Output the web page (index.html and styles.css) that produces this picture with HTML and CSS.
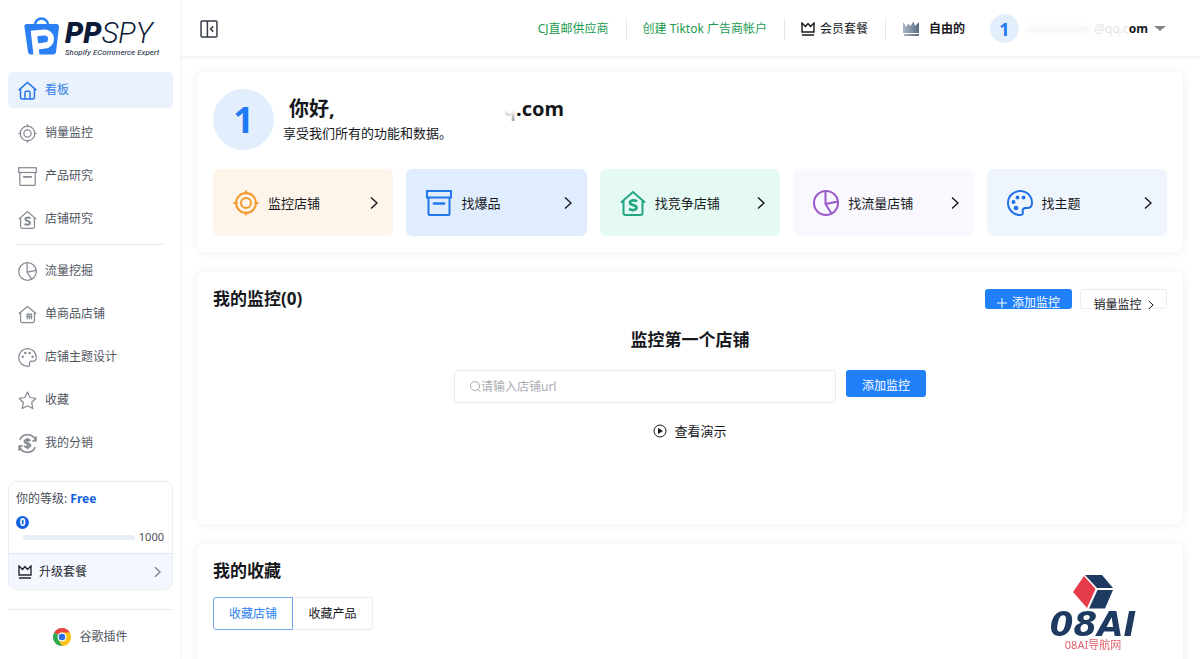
FILE: index.html
```html
<!DOCTYPE html>
<html lang="zh-CN">
<head>
<meta charset="utf-8">
<meta name="viewport" content="width=device-width, initial-scale=1">
<title>PPSPY</title>
<link rel="stylesheet" href="styles.css">
</head>
<body>
<svg class="sprite" aria-hidden="true">
  <symbol id="target" viewBox="0 0 26 26"><circle cx="13" cy="13" r="10"/><circle cx="13" cy="13" r="5"/><path d="M13 0.5v4M13 21.500v4M0.500 13h4M21.500 13h4"/></symbol>
  <symbol id="archive" viewBox="0 0 26 26"><rect x="1" y="1" width="24" height="6.500"/><path d="M2.500 7.500V24a1 1 0 0 0 1 1h19a1 1 0 0 0 1-1V7.500"/><path d="M8 13.500h10" stroke-width="2.700" stroke-linecap="round"/></symbol>
  <symbol id="shop" viewBox="0 0 26 26"><path d="M1 12.500L13 2l12 10.500M3.500 10.500V23a2 2 0 0 0 2 2h15a2 2 0 0 0 2-2V10.500"/><path stroke-width="2.700" d="M17 11.500c-2-1.700-7-1.500-7 1.300 0 3 6.500 1.700 6.500 4.800 0 3-5 3-7.500 1.300"/></symbol>
  <symbol id="pie" viewBox="0 0 26 26"><circle cx="13" cy="13" r="12"/><path d="M12.500 1v13L18.500 23.500M12.500 14L25 11.500"/></symbol>
  <symbol id="palette" viewBox="0 0 26 26"><path d="M13 1a12 12 0 1 0 0 24c3.500 0 3-2 2.700-3.700-.3-2 1.300-3.600 3.300-3.300 4 .6 6-1.500 6-5C25 6 20 1 13 1z"/><g fill="currentColor" stroke="none"><circle cx="6.500" cy="12" r="2"/><circle cx="10.500" cy="7.500" r="1.900"/><circle cx="16.500" cy="7.500" r="1.900"/><circle cx="9" cy="18" r="2.300"/></g></symbol>
  <symbol id="palette-sm" viewBox="0 0 26 26"><path d="M13 1a12 12 0 1 0 0 24c3.500 0 3-2 2.700-3.700-.3-2 1.300-3.600 3.300-3.300 4 .6 6-1.500 6-5C25 6 20 1 13 1z"/><g fill="currentColor" stroke="none"><circle cx="6.500" cy="12" r="1.700"/><circle cx="10" cy="7" r="1.700"/><circle cx="16" cy="7" r="1.700"/><circle cx="20" cy="12" r="1.700"/></g></symbol>
  <symbol id="home" viewBox="0 0 26 26"><path d="M1 12.500L13 2l12 10.500M3.500 10.500V22a2.500 2.500 0 0 0 2.500 2.500h14a2.500 2.500 0 0 0 2.500-2.500V10.500M9.500 24.500V16a2 2 0 0 1 2-2h3a2 2 0 0 1 2 2v8.500"/></symbol>
  <symbol id="single" viewBox="0 0 26 26"><path d="M1 12L13 2l12 10M3.500 10.500V22a2 2 0 0 0 2 2h15a2 2 0 0 0 2-2V10.500"/><path d="M12.500 19.500v-7h6v7M15.500 12.500v7M12.500 16h6"/></symbol>
  <symbol id="star" viewBox="0 0 26 26"><path stroke-linejoin="round" d="M13 1.500l3.500 7.400 8 1.100-5.800 5.700 1.500 8.300L13 20.200 5.800 24l1.500-8.300L1.500 10l8-1.100z"/></symbol>
  <symbol id="coin" viewBox="0 0 26 26"><path stroke-width="2.200" d="M2 17A11.500 11.500 0 0 0 23.500 18M24 9A11.500 11.500 0 0 0 2.500 8M24.500 3v6.500h-5M1.500 23v-6.500h5"/><path stroke-width="2.700" d="M17 9.500c-2-2.300-8-2-8 1s8 2 8 5-6 3.300-8.500.8M13 5v16"/></symbol>
  <symbol id="crown" viewBox="0 0 14 14"><path d="M1 1v9h12V1L9.500 4.500 7 1.500 4.500 4.500zM1 13h12"/></symbol>
  <symbol id="chevron" viewBox="0 0 8 14"><path d="M1 1.500L7 7l-6 5.500"/></symbol>
</svg>
<div class="app">
  <aside class="sidebar">
    <a class="brand" href="#" aria-label="PPSPY">
      <svg class="brand-bag" viewBox="0 0 36 40" aria-hidden="true"><path d="M11 9a6.500 6.500 0 0 1 13 0" fill="none" stroke="#2c83f6" stroke-width="2.500"/><path d="M2.500 8h30A2.500 2.500 0 0 1 35 11l-3 25a3 3 0 0 1-3 2.500H7A3 3 0 0 1 4 36L.5 11a2.500 2.500 0 0 1 2-3z" fill="#2c7ff2"/><path d="M12.500 39L10 17.500l10-1a6 6 0 0 1 1 13l-7 1" fill="none" stroke="#fff" stroke-width="6"/></svg>
      <span class="brand-text"><span class="brand-name"><b>PP</b>SPY</span><span class="brand-sub">Shopify ECommerce Expert</span></span>
    </a>
    <nav class="nav">
      <a class="nav-item active" href="#"><svg class="icon"><use href="#home"/></svg>看板</a>
      <a class="nav-item" href="#"><svg class="icon"><use href="#target"/></svg>销量监控</a>
      <a class="nav-item" href="#"><svg class="icon"><use href="#archive"/></svg>产品研究</a>
      <a class="nav-item" href="#"><svg class="icon"><use href="#shop"/></svg>店铺研究</a>
      <hr class="nav-line">
      <a class="nav-item" href="#"><svg class="icon"><use href="#pie"/></svg>流量挖掘</a>
      <a class="nav-item" href="#"><svg class="icon"><use href="#single"/></svg>单商品店铺</a>
      <a class="nav-item" href="#"><svg class="icon"><use href="#palette-sm"/></svg>店铺主题设计</a>
      <a class="nav-item" href="#"><svg class="icon"><use href="#star"/></svg>收藏</a>
      <a class="nav-item" href="#"><svg class="icon"><use href="#coin"/></svg>我的分销</a>
    </nav>
    <section class="level">
      <div class="level-body">
        <div>你的等级: <b class="level-name">Free</b></div>
        <span class="level-count">0</span>
        <div class="level-row"><span class="level-track"></span><span>1000</span></div>
      </div>
      <a class="level-link" href="#"><svg class="crown"><use href="#crown"/></svg>升级套餐<svg class="chevron small"><use href="#chevron"/></svg></a>
    </section>
    <a class="plugin" href="#">
      <svg class="chrome" viewBox="0 0 18 18" aria-hidden="true"><path d="M9 9L1.200 4.500a9 9 0 0 1 15.600 0z" fill="#e8453c"/><path d="M9 9l7.800-4.500A9 9 0 0 1 9 18z" fill="#fbc116"/><path d="M9 9v9A9 9 0 0 1 1.200 4.500z" fill="#2da94f"/><path d="M9 4.500h7.800l-4 6.700zM5 11.200l4 2 3.900-2L9 18z" fill="#fbc116"/><circle cx="9" cy="9" r="4.500" fill="#fff"/><circle cx="9" cy="9" r="3.300" fill="#2d6fe0"/></svg>
      谷歌插件
    </a>
  </aside>
  <div class="page">
    <header class="topbar">
      <button class="collapse" type="button" aria-label="收起"><svg viewBox="0 0 17 17"><rect x="1" y="1" width="15" height="15" rx="1"/><path d="M7 1v15M12.500 6L10 8.500l2.500 2.500"/></svg></button>
      <div class="top-items">
        <a class="green" href="#">CJ直邮供应商</a>
        <span class="sep"></span>
        <a class="green" href="#">创建 Tiktok 广告商帐户</a>
        <span class="sep"></span>
        <a class="plan" href="#"><svg class="crown"><use href="#crown"/></svg>会员套餐</a>
        <span class="sep"></span>
        <span class="tier"><svg class="tier-crown" viewBox="0 0 18 15" aria-hidden="true"><defs><linearGradient id="steel"><stop offset="0" stop-color="#a9b7c9"/><stop offset="1" stop-color="#596b80"/></linearGradient></defs><path d="M1 1l3.500 5L6 2.500 8.500 5l3-4.500L13 5l4-4v11H1zM2 13h15v2H2z" fill="url(#steel)"/></svg>自由的</span>
        <button class="account" type="button"><span class="avatar">1</span><span class="mail"><span class="smudge"></span><span class="mail-faint">@qq.c</span><b>om</b></span><span class="caret"></span></button>
      </div>
    </header>
    <main class="main">
      <section class="card">
        <div class="hello">
          <span class="avatar large">1</span>
          <div>
            <h1 class="greeting"><span>你好,</span><span class="greeting-mail"><i class="faded">q</i>.com</span></h1>
            <p class="tagline">享受我们所有的功能和数据。</p>
          </div>
        </div>
        <div class="features">
          <a class="feature orange" href="#"><svg class="icon"><use href="#target"/></svg>监控店铺<svg class="chevron"><use href="#chevron"/></svg></a>
          <a class="feature blue" href="#"><svg class="icon"><use href="#archive"/></svg>找爆品<svg class="chevron"><use href="#chevron"/></svg></a>
          <a class="feature mint" href="#"><svg class="icon"><use href="#shop"/></svg>找竞争店铺<svg class="chevron"><use href="#chevron"/></svg></a>
          <a class="feature purple" href="#"><svg class="icon"><use href="#pie"/></svg>找流量店铺<svg class="chevron"><use href="#chevron"/></svg></a>
          <a class="feature sky" href="#"><svg class="icon"><use href="#palette"/></svg>找主题<svg class="chevron"><use href="#chevron"/></svg></a>
        </div>
      </section>
      <section class="card monitor">
        <div class="card-head">
          <h2 class="title">我的监控(0)</h2>
          <div class="actions">
            <button class="btn primary short" type="button"><svg class="plus" viewBox="0 0 10 10"><path d="M5 0v10M0 5h10"/></svg>添加监控</button>
            <button class="btn plain short" type="button">销量监控<svg class="chevron tiny"><use href="#chevron"/></svg></button>
          </div>
        </div>
        <h3 class="title first">监控第一个店铺</h3>
        <form class="search">
          <label class="field"><svg class="lens" viewBox="0 0 11 12" aria-hidden="true"><circle cx="5" cy="5" r="4.500"/><path d="M8 8.500l2.500 2.500"/></svg><input type="text" placeholder="请输入店铺url" aria-label="店铺url"></label>
          <button class="btn primary add" type="button">添加监控</button>
        </form>
        <a class="demo" href="#"><svg viewBox="0 0 14 14" aria-hidden="true"><circle cx="7" cy="7" r="6" fill="none" stroke="currentColor"/><path d="M5 4l5 3-5 3z" fill="currentColor"/></svg>查看演示</a>
      </section>
      <section class="card saved">
        <h2 class="title">我的收藏</h2>
        <div class="tabs">
          <button class="tab on" type="button">收藏店铺</button><button class="tab" type="button">收藏产品</button>
        </div>
      </section>
    </main>
  </div>
</div>
<div class="mark">
  <svg viewBox="0 0 40 34" aria-hidden="true"><path d="M12 0h17l11 13H24z" fill="#1f3a61"/><path d="M24.500 15H40l-8 18.500H16z" fill="#1f3a61"/><path d="M11 1l11.500 13L14 33 0 17z" fill="#e63b48"/></svg>
  <span class="mark-name">08AI</span>
  <span class="mark-sub">08AI导航网</span>
</div>
</body>
</html>
```

FILE: styles.css
```css
* { box-sizing: border-box; }
body {
  margin: 0;
  font: 12px/18px "Noto Sans", "Noto Sans CJK SC", sans-serif;
  color: #16181c;
  background: #fff;
}
a { color: inherit; text-decoration: none; }
button { font: inherit; color: inherit; background: none; border: 0; padding: 0; cursor: pointer; }
h1, h2, h3, p { margin: 0; }
svg { flex: none; fill: none; stroke: currentColor; }
.sprite { display: none; }
.app { display: flex; height: 100vh; overflow: hidden; }

.sidebar {
  width: 180px;
  flex: none;
  padding: 0 7px 0 8px;
  box-shadow: 0 0 3px #e4e4e6;
}
.brand { display: flex; gap: 5px; height: 72px; padding: 16px 0 0 16px; color: #0d1b3a; }
.brand svg { stroke: none; }
.brand-bag { width: 36px; height: 40px; }
.brand-text { display: flex; flex-direction: column; padding-top: 1px; font-family: Roboto, sans-serif; font-style: italic; white-space: nowrap; }
.brand-name { font-size: 29px; line-height: 32px; font-weight: 300; }
.brand-name b { font-weight: 900; }
.brand-sub { font-size: 8px; line-height: 8px; font-weight: 400; }
.nav { display: flex; flex-direction: column; gap: 7px; }
.nav-item {
  display: flex;
  align-items: center;
  gap: 8px;
  height: 36px;
  padding-left: 10px;
  border-radius: 5px;
  color: #50555f;
}
.nav-item .icon { width: 19px; height: 19px; stroke-width: 1.7; color: #858a93; }
.nav-item.active { background: #eaf2fd; color: #3480e8; }
.nav-item.active .icon { color: #2274e6; stroke-width: 2; }
.nav-line { width: 148px; height: 1px; margin: 0 0 1px 8px; border: 0; background: #eaebee; }

.level { margin-top: 20px; border: 1px solid #e9ecf3; border-radius: 8px; overflow: hidden; color: #4a4e57; }
.level-body { height: 71px; padding: 8px 8px 0 7px; }
.level-name { color: #1260e0; }
.level-count {
  display: block;
  width: 13px;
  height: 13px;
  margin-top: 8px;
  border-radius: 50%;
  background: #1260e0;
  color: #fff;
  font-size: 10px;
  line-height: 13px;
  font-weight: 700;
  text-align: center;
}
.level-row { display: flex; align-items: center; gap: 4px; padding-left: 7px; font-size: 11px; line-height: 16px; }
.level-track { flex: 1; height: 5px; border-radius: 3px; background: #e9edf6; }
.level-link { display: flex; align-items: center; gap: 7px; height: 36px; padding: 0 11px 0 9px; border-top: 1px solid #e1e6f1; background: #f4f7fd; color: #24272e; }
.crown { width: 14px; height: 14px; stroke-width: 1.4; }
.chevron { width: 8px; height: 14px; margin-left: auto; stroke-width: 1.4; }
.chevron.small { width: 7px; height: 12px; color: #777c86; }
.plugin { display: flex; align-items: center; justify-content: center; gap: 8px; margin-top: 19px; height: 54px; border-top: 1px solid #ececef; color: #50555f; }
.chrome { width: 18px; height: 18px; stroke: none; }

.page { flex: 1; min-width: 0; overflow-y: auto; scrollbar-width: none; }
.topbar { display: flex; align-items: center; justify-content: space-between; height: 56px; padding: 1px 34px 0 20px; box-shadow: 0 1px 3px #ececee; }
.collapse { display: flex; color: #363b45; }
.collapse svg { width: 18px; height: 18px; stroke-width: 1.4; }
.top-items { display: flex; align-items: center; gap: 17px; white-space: nowrap; }
.green { color: #1b9b50; }
.sep { width: 1px; height: 22px; margin: 0 -1px 0 0; background: #e8e8ea; }
.plan { display: flex; align-items: center; gap: 5px; }
.tier { display: flex; align-items: center; gap: 9px; margin-right: 8px; font-weight: 700; }
.tier-crown { width: 18px; height: 15px; stroke: none; }
.account { display: flex; align-items: center; gap: 6px; }
.avatar { display: flex; align-items: center; justify-content: center; flex: none; width: 29px; height: 29px; border-radius: 50%; background: #e3eefd; color: #1f7af4; font-size: 18px; font-weight: 700; }
.mail { display: flex; align-items: center; justify-content: flex-end; width: 123px; }
.smudge { flex: 1; height: 6px; margin-right: 4px; background: #f7f7f7; filter: blur(2px); }
.mail-faint { color: #e4e4e4; }
.caret { border: 6px solid transparent; border-top: 5px solid #858585; border-bottom: 0; }

.main { display: flex; flex-direction: column; gap: 20px; padding: 16px 17px 16px 17px; }
.card { padding: 17px 16px 16px; border-radius: 6px; background: #fff; box-shadow: 0 0 10px #ededee; }
.hello { display: flex; align-items: center; gap: 9px; }
.avatar.large { width: 61px; height: 61px; font-size: 36px; }
.greeting { display: flex; justify-content: space-between; width: 281px; padding-left: 6px; font-size: 20px; line-height: 26px; }
.faded { font-style: normal; color: transparent; background: linear-gradient(#fff 55%, #999); background-clip: text; -webkit-background-clip: text; }
.tagline { font-size: 13px; line-height: 22px; }
.features { display: grid; grid-template-columns: repeat(5, 1fr); gap: 13px; margin-top: 19px; }
.feature { display: flex; align-items: center; gap: 9px; height: 67px; padding: 0 15px 0 20px; border-radius: 6px; font-size: 13px; white-space: nowrap; }
.feature .icon { width: 26px; height: 26px; stroke-width: 2; }
.orange { background: #fef5ea; } .orange .icon { color: #f29a2e; }
.blue { background: #e0edfe; } .blue .icon { color: #1f78f0; }
.mint { background: #e4faf3; } .mint .icon { color: #24a583; }
.purple { background: #f9f8ff; } .purple .icon { color: #9b59c8; }
.sky { background: #eff5fd; } .sky .icon { color: #1f70e8; }

.monitor { display: flex; flex-direction: column; align-items: center; min-height: 252px; }
.card-head { display: flex; justify-content: space-between; align-self: stretch; height: 20px; }
.title { font-size: 17px; line-height: 20px; font-weight: 700; }
.actions { display: flex; gap: 8px; }
.btn { display: flex; align-items: center; justify-content: center; border-radius: 3px; white-space: nowrap; }
.short { width: 87px; height: 20px; }
.primary { background: #2080fa; color: #fff; }
.primary.short { align-items: flex-start; gap: 5px; padding-top: 5px; overflow: hidden; }
.plus { width: 10px; height: 10px; margin-top: 4px; }
.plain { align-items: flex-start; gap: 6px; padding-top: 6px; border: 1px solid #ececee; }
.tiny { width: 6px; height: 10px; margin: 4px 0 0; }
.first { margin-top: 21px; }
.search { display: flex; gap: 10px; width: 472px; max-width: 100%; margin-top: 20px; }
.field { display: flex; align-items: center; flex: 1; height: 33px; padding-left: 15px; border: 1px solid #ebebed; border-radius: 3px; color: #aaa; }
.lens { width: 11px; height: 12px; }
.field input { flex: 1; min-width: 0; padding: 0; border: 0; outline: 0; background: none; font: inherit; color: #333; }
.field input::placeholder { color: #aaadb3; }
.add { width: 80px; height: 27px; padding-top: 4px; }
.demo { display: flex; align-items: center; gap: 7px; margin-top: 19px; font-size: 13px; }
.demo svg { width: 14px; height: 14px; stroke: none; }
.saved { min-height: 250px; }
.tabs { display: flex; margin-top: 16px; }
.tab { width: 80px; height: 33px; border: 1px solid #ececee; border-left: 0; border-radius: 0 3px 3px 0; }
.tab.on { border: 1px solid #71a9e8; border-radius: 3px 0 0 3px; color: #2b7fee; }

.mark { position: fixed; right: 60px; bottom: 8px; display: flex; flex-direction: column; align-items: center; width: 94px; color: #1f3a61; }
.mark svg { width: 40px; height: 34px; stroke: none; }
.mark-name { font: italic 700 34px/30px "DejaVu Sans", sans-serif; }
.mark-sub { font-size: 11px; line-height: 12px; color: #e0626c; }
```
